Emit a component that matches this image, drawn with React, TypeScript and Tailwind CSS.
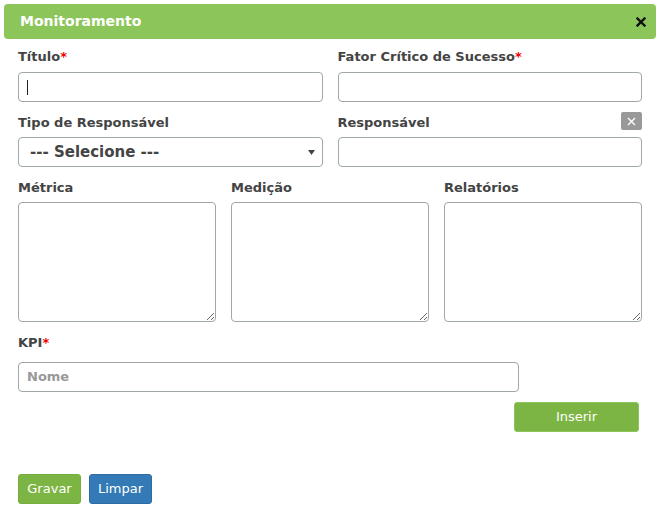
import React from "react";

const font = { fontFamily: '"DejaVu Sans", Verdana, sans-serif' };

function Label({ text, req }: { text: string; req?: boolean }) {
  return (
    <div className="h-[15px] text-[13px] font-bold leading-[15px] text-[#444]">
      {text}
      {req && <span className="text-[#e00]">*</span>}
    </div>
  );
}

function TextArea() {
  return (
    <textarea className="block h-[120px] w-full resize-y rounded-[4px] border border-[#a0a8a8] bg-white outline-none" />
  );
}

export default function App() {
  return (
    <div className="h-[511px] w-[660px] bg-white" style={font}>
      <div className="px-[4px] pt-[4px]">
        <div className="flex h-[35px] items-center justify-between rounded-[4px] bg-[#8cc65a] pl-[16px] pr-[10px]">
          <span className="text-[14px] font-bold text-white">Monitoramento</span>
          <svg width="10" height="10" viewBox="0 0 10 10">
            <path d="M1.5 1.5 L8.5 8.5 M8.5 1.5 L1.5 8.5" stroke="#111" strokeWidth="2.4" strokeLinecap="square" />
          </svg>
        </div>
      </div>

      <div className="pl-[18px] pr-[18px]">
        <div className="mt-[10px] grid grid-cols-2 gap-x-[15px]">
          <div>
            <Label text="Título" req />
            <div className="mt-[8px] flex h-[30px] items-center rounded-[4px] border border-[#a0a8a8] px-[8px]">
              <div className="h-[15px] w-px bg-[#222]" />
            </div>
          </div>
          <div>
            <Label text="Fator Crítico de Sucesso" req />
            <div className="mt-[8px] h-[30px] rounded-[4px] border border-[#a0a8a8]" />
          </div>
        </div>

        <div className="mt-[13px] grid grid-cols-2 gap-x-[15px]">
          <div>
            <Label text="Tipo de Responsável" />
            <div className="mt-[7px] flex h-[30px] items-center justify-between rounded-[4px] border border-[#a0a8a8] pl-[11px] pr-[7px]">
              <span className="text-[15px] font-bold text-[#444]">--- Selecione ---</span>
              <svg width="7" height="5" viewBox="0 0 7 5">
                <path d="M0 0 L7 0 L3.5 5 Z" fill="#444" />
              </svg>
            </div>
          </div>
          <div>
            <div className="flex items-end justify-between">
              <Label text="Responsável" />
              <div className="-mt-[3px] flex h-[18px] w-[21px] items-center justify-center rounded-[2px] bg-[#999]">
                <svg width="9" height="9" viewBox="0 0 9 9">
                  <path d="M1 1 L8 8 M8 1 L1 8" stroke="#fff" strokeWidth="1.4" />
                </svg>
              </div>
            </div>
            <div className="mt-[7px] h-[30px] rounded-[4px] border border-[#a0a8a8]" />
          </div>
        </div>

        <div className="mt-[13px] grid grid-cols-3 gap-x-[15px]">
          <div>
            <Label text="Métrica" />
            <div className="mt-[7px]">
              <TextArea />
            </div>
          </div>
          <div>
            <Label text="Medição" />
            <div className="mt-[7px]">
              <TextArea />
            </div>
          </div>
          <div>
            <Label text="Relatórios" />
            <div className="mt-[7px]">
              <TextArea />
            </div>
          </div>
        </div>

        <div className="mt-[13px]">
          <Label text="KPI" req />
        </div>
        <div className="mt-[12px] flex h-[30px] w-[501px] items-center rounded-[4px] border border-[#a0a8a8] px-[8px]">
          <span className="text-[13px] font-bold text-[#999]">Nome</span>
        </div>

        <div className="mt-[10px] flex justify-end pr-[3px]">
          <button className="h-[30px] w-[125px] rounded-[3px] border border-[#8cc65a] bg-[#7db544] text-[13px] text-white">
            Inserir
          </button>
        </div>

        <div className="mt-[42px] flex gap-[8px]">
          <button className="h-[30px] w-[63px] rounded-[3px] border border-[#76ad3f] bg-[#7db544] text-[13px] text-white">
            Gravar
          </button>
          <button className="h-[30px] w-[63px] rounded-[3px] border border-[#2e6da4] bg-[#337ab7] text-[13px] text-white">
            Limpar
          </button>
        </div>
      </div>
    </div>
  );
}
